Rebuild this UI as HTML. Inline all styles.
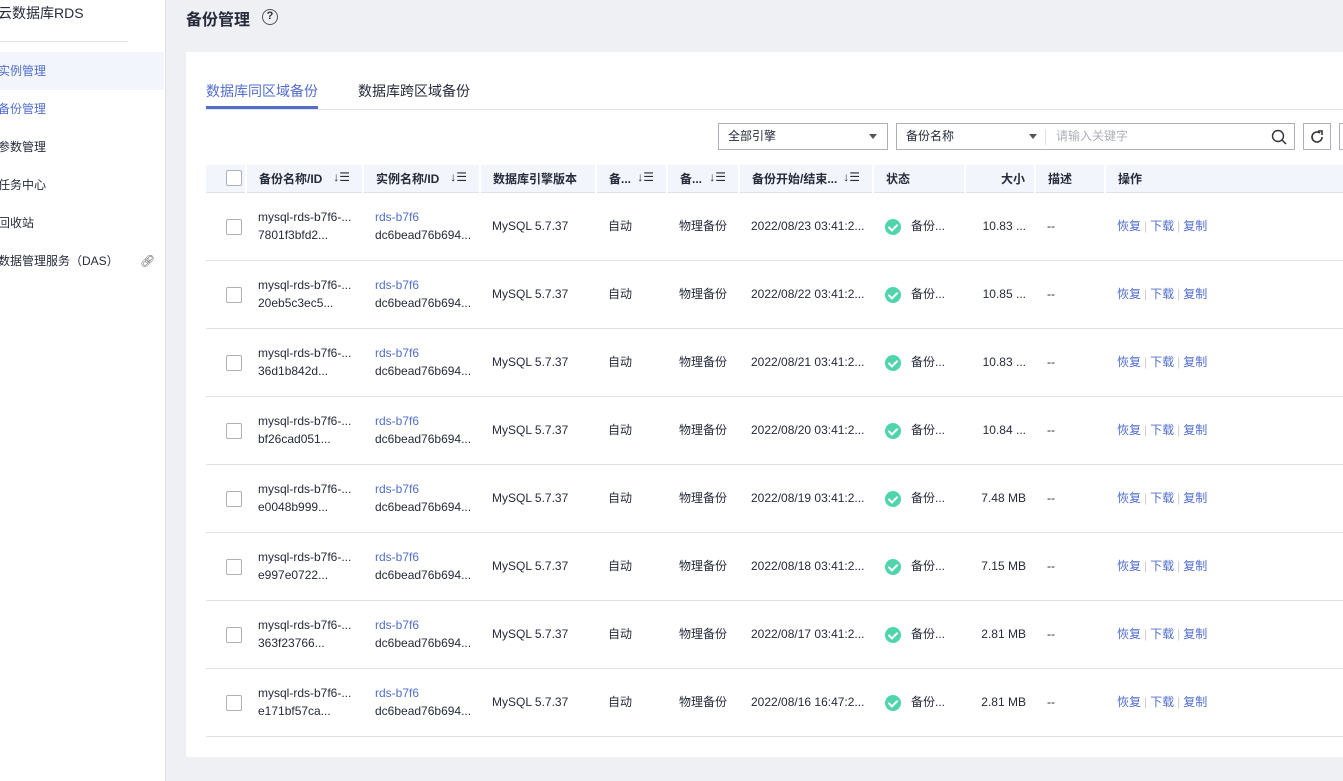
<!DOCTYPE html>
<html><head><meta charset="utf-8"><style>
*{box-sizing:border-box;margin:0;padding:0}
body{width:1343px;height:781px;overflow:hidden;background:#eff0f4;font-family:"Liberation Sans","Noto Sans CJK SC",sans-serif;font-size:12px;color:#252b3a;position:relative}
.side{position:absolute;left:0;top:0;width:166px;height:781px;background:#fff;border-right:1px solid #dfe1e6}
.side .t{position:absolute;left:-2px;top:3px;font-size:14px}
.side .ln{position:absolute;left:0;top:41px;width:128px;height:1px;background:#dfe1e6}
.nav{position:absolute;left:-2px;width:166px;height:38px;line-height:38px;font-size:12px;color:#252b3a}
.nav.a{background:#f2f5fc;color:#526ecc}
.hd{position:absolute;left:186px;top:6px;font-size:16px;font-weight:bold}
.q{position:absolute;left:262px;top:9px;width:16px;height:16px;border:1.5px solid #555;border-radius:50%;font-size:11px;text-align:center;line-height:13px;font-weight:bold}
.card{position:absolute;left:186px;top:52px;width:1157px;height:705px;background:#fff}
.tab{position:absolute;top:29px;font-size:14px}
.tabline{position:absolute;left:20px;top:57px;right:0;height:1px;background:#dfe1e6}
.sel{position:absolute;top:71px;height:27px;border:1px solid #adb0b8;font-size:12px;line-height:25px;padding-left:9px}
.tri{position:absolute;width:0;height:0;border-left:4px solid transparent;border-right:4px solid transparent;border-top:5px solid #555;top:10px}
table{position:absolute;left:20px;top:113px;border-collapse:collapse;table-layout:fixed}
th{height:27px;background:#f2f5fc;text-align:left;font-weight:bold;padding-left:12px;border-bottom:1px solid #dfe1e6;border-left:2px solid #fff;white-space:nowrap;overflow:hidden}
td{height:68px;border-bottom:1px solid #dfe1e6;padding-left:12px;white-space:nowrap;overflow:hidden;line-height:18px}
.cb{display:inline-block;width:16px;height:16px;border:1px solid #adb0b8;border-radius:2px;vertical-align:middle}
.link{color:#526ecc}
.sort{float:right;margin-right:12px;font-weight:normal}
.ok{display:inline-block;width:16px;height:16px;border-radius:50%;background:#50d4ab;vertical-align:middle;margin-right:10px;position:relative}
.ok:after{content:"";position:absolute;left:5px;top:3px;width:4px;height:7px;border:solid #fff;border-width:0 2px 2px 0;transform:rotate(45deg)}
.sep{color:#ccc;margin:0 3px}
</style></head><body>
<div class="side">
<div class="t">云数据库RDS</div><div class="ln"></div>
<div class="nav a" style="top:52px">实例管理</div>
<div class="nav" style="top:90px;color:#526ecc">备份管理</div>
<div class="nav" style="top:128px">参数管理</div>
<div class="nav" style="top:166px">任务中心</div>
<div class="nav" style="top:204px">回收站</div>
<div class="nav" style="top:242px">数据管理服务（DAS）<span style="position:absolute;left:142px;color:#666">&#x1F517;&#xFE0E;</span></div>
</div>
<div class="hd">备份管理</div><div class="q">?</div>
<div class="card">
<div class="tab" style="left:20px;color:#526ecc">数据库同区域备份</div>
<div class="tab" style="left:172px">数据库跨区域备份</div>
<div class="tabline"></div>
<div style="position:absolute;left:20px;top:54px;width:112px;height:3px;background:#526ecc"></div>
<div class="sel" style="left:532px;width:170px">全部引擎<span class="tri" style="left:150px"></span></div>
<div class="sel" style="left:710px;width:399px">备份名称<span class="tri" style="left:132px"></span><span style="position:absolute;left:148px;top:5px;width:1px;height:16px;background:#dfe1e6"></span><span style="position:absolute;left:159px;color:#adb0b8">请输入关键字</span>
<svg style="position:absolute;left:374px;top:5px" width="16" height="16" viewBox="0 0 16 16"><circle cx="7" cy="7" r="5.5" fill="none" stroke="#333" stroke-width="1.4"/><path d="M11 11l4 4" stroke="#333" stroke-width="1.5"/></svg></div>
<div class="sel" style="left:1117px;width:28px;padding:0"><svg style="position:absolute;left:5px;top:5px" width="16" height="16" viewBox="0 0 16 16"><path d="M13 8a5 5 0 1 1-2-4" fill="none" stroke="#333" stroke-width="1.6"/><path d="M9 2h4v4" fill="none" stroke="#333" stroke-width="1.6"/></svg></div>
<div class="sel" style="left:1153px;width:10px;padding:0"></div>
<table>
<colgroup><col style="width:40px"><col style="width:117px"><col style="width:117px"><col style="width:116px"><col style="width:71px"><col style="width:72px"><col style="width:134px"><col style="width:92px"><col style="width:70px"><col style="width:70px"><col style="width:238px"></colgroup>
<tr><th style="padding-left:20px;border-left:0"><span class="cb" style="background:#fff"></span></th><th>备份名称/ID<span class="sort">↓☰</span></th><th>实例名称/ID<span class="sort">↓☰</span></th><th>数据库引擎版本</th><th>备...<span class="sort">↓☰</span></th><th>备...<span class="sort">↓☰</span></th><th>备份开始/结束...<span class="sort">↓☰</span></th><th>状态</th><th style="text-align:right;padding-right:9px">大小</th><th>描述</th><th>操作</th></tr>
<tbody id="b"></tbody>
</table>
</div>
<script>
var d=[["7801f3bfd2...","23","03:41:2...","10.83 ..."],["20eb5c3ec5...","22","03:41:2...","10.85 ..."],["36d1b842d...","21","03:41:2...","10.83 ..."],["bf26cad051...","20","03:41:2...","10.84 ..."],["e0048b999...","19","03:41:2...","7.48 MB"],["e997e0722...","18","03:41:2...","7.15 MB"],["363f23766...","17","03:41:2...","2.81 MB"],["e171bf57ca...","16","16:47:2...","2.81 MB"]];
var h="";d.forEach(function(r){h+='<tr><td style="padding-left:20px"><span class="cb"></span></td><td>mysql-rds-b7f6-...<br>'+r[0]+'</td><td><span class="link">rds-b7f6</span><br>dc6bead76b694...</td><td>MySQL 5.7.37</td><td>自动</td><td>物理备份</td><td>2022/08/'+r[1]+' '+r[2]+'</td><td><span class="ok"></span>备份...</td><td style="text-align:right;padding-right:9px">'+r[3]+'</td><td>--</td><td class="link">恢复<span class="sep">|</span>下载<span class="sep">|</span>复制</td></tr>'});
document.getElementById("b").innerHTML=h;
</script>
</body></html>
